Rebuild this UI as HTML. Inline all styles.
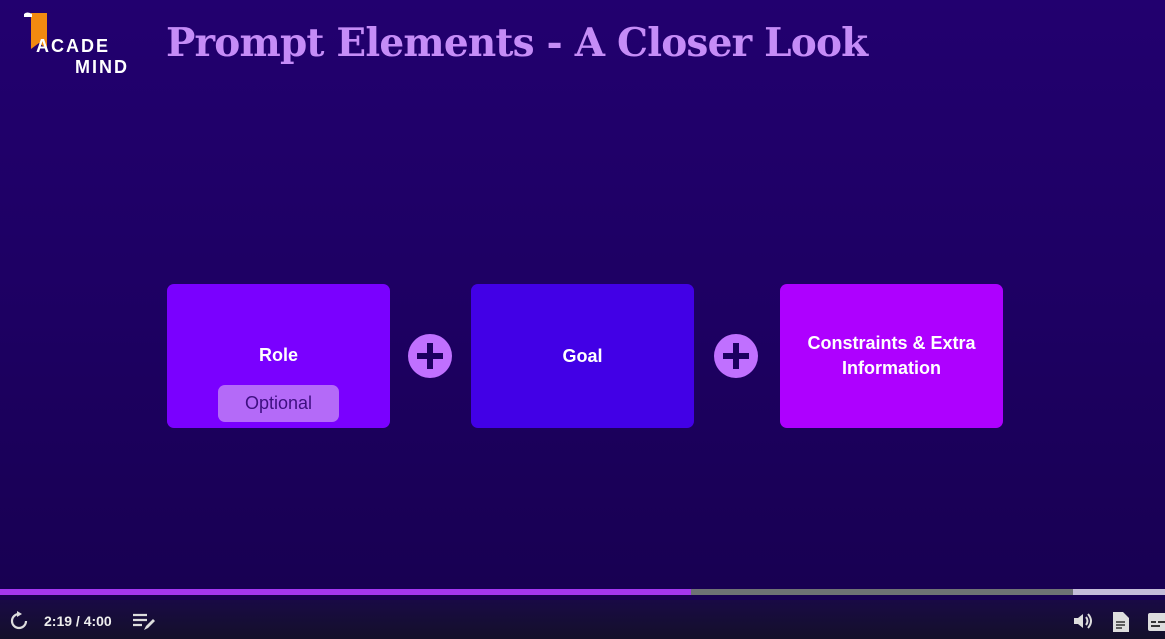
<!DOCTYPE html>
<html><head><style>
*{margin:0;padding:0;box-sizing:border-box}
body{width:1165px;height:639px;overflow:hidden;position:relative;font-family:"Liberation Sans",sans-serif;background:linear-gradient(#22006f 0%,#1d0062 50%,#180052 92%);}
.t{position:absolute;left:166px;top:20px;font-family:"DejaVu Serif",serif;font-weight:bold;font-size:39px;color:#c58cf7;letter-spacing:-0.8px;white-space:nowrap}
.box{position:absolute;top:284px;width:223px;height:144px;border-radius:7px;color:#fff;font-weight:bold;font-size:18px;display:flex;align-items:center;justify-content:center;text-align:center;line-height:25px}
.plus{position:absolute;top:334px;width:44px;height:44px;border-radius:50%;background:#c070ff}
.plus:before{content:"";position:absolute;left:9px;top:19px;width:26px;height:6px;background:#1c0060}
.plus:after{content:"";position:absolute;left:19px;top:9px;width:6px;height:26px;background:#1c0060}
.bar{position:absolute;left:0;top:600px;width:1165px;height:39px;background:linear-gradient(#190a45,#14102a)}
</style></head><body>
<svg style="position:absolute;left:24px;top:12px" width="30" height="40"><path d="M7 1h16v36l-8-6-8 6z" fill="#f28a10"/><path d="M0 2q3-3 8 0v3H0z" fill="#fff"/></svg>
<div style="position:absolute;left:36px;top:36px;color:#fff;font-weight:bold;font-size:18px;letter-spacing:2px">ACADE</div>
<div style="position:absolute;left:75px;top:57px;color:#fff;font-weight:bold;font-size:18px;letter-spacing:2px">MIND</div>
<div class="t">Prompt Elements - A Closer Look</div>
<div class="box" style="left:167px;background:#7a00ff"><span style="margin-top:-2px">Role</span>
<div style="position:absolute;left:51px;top:101px;width:121px;height:37px;border-radius:7px;background:#b46af8;color:#3d0f80;font-weight:normal;font-size:18px;line-height:37px">Optional</div></div>
<div class="plus" style="left:408px"></div>
<div class="box" style="left:471px;background:#4200e6">Goal</div>
<div class="plus" style="left:714px"></div>
<div class="box" style="left:780px;background:#ae00ff">Constraints &amp; Extra<br>Information</div>
<div style="position:absolute;left:0;top:589px;width:691px;height:6px;background:#a436f0"></div>
<div style="position:absolute;left:691px;top:589px;width:382px;height:6px;background:#6e7274"></div>
<div style="position:absolute;left:1073px;top:589px;width:92px;height:6px;background:#c4bcd8"></div>
<div class="bar"></div>
<svg style="position:absolute;left:9px;top:611px" width="20" height="20"><path d="M10 3A7 7 0 1 0 17 10" fill="none" stroke="#ddd" stroke-width="2.2"/><path d="M8 0l5 3-5 3z" fill="#ddd"/></svg>
<div style="position:absolute;left:44px;top:613px;color:#eee;font-weight:bold;font-size:14px">2:19 / 4:00</div>
<svg style="position:absolute;left:132px;top:612px" width="24" height="20"><path d="M1 3h14M1 8h14M1 13h9" stroke="#ddd" stroke-width="2.2"/><path d="M12 18l2-4 7-7 2 2-7 7z" fill="#ddd"/></svg>
<svg style="position:absolute;left:1072px;top:611px" width="22" height="20"><path d="M2 7h4l5-4v14l-5-4H2z" fill="#ddd"/><path d="M14 6q3 4 0 8M16 3q6 7 0 14" fill="none" stroke="#ddd" stroke-width="2"/></svg>
<svg style="position:absolute;left:1112px;top:611px" width="18" height="22"><path d="M1 1h10l6 6v14H1z" fill="#ddd"/><path d="M4 11h9M4 14h9M4 17h6" stroke="#333" stroke-width="1.5"/></svg>
<svg style="position:absolute;left:1148px;top:613px" width="17" height="18"><rect x="0" y="0" width="22" height="18" rx="2" fill="#ddd"/><path d="M3 9h5M10 9h7M3 13h9" stroke="#333" stroke-width="2"/></svg>
</body></html>
